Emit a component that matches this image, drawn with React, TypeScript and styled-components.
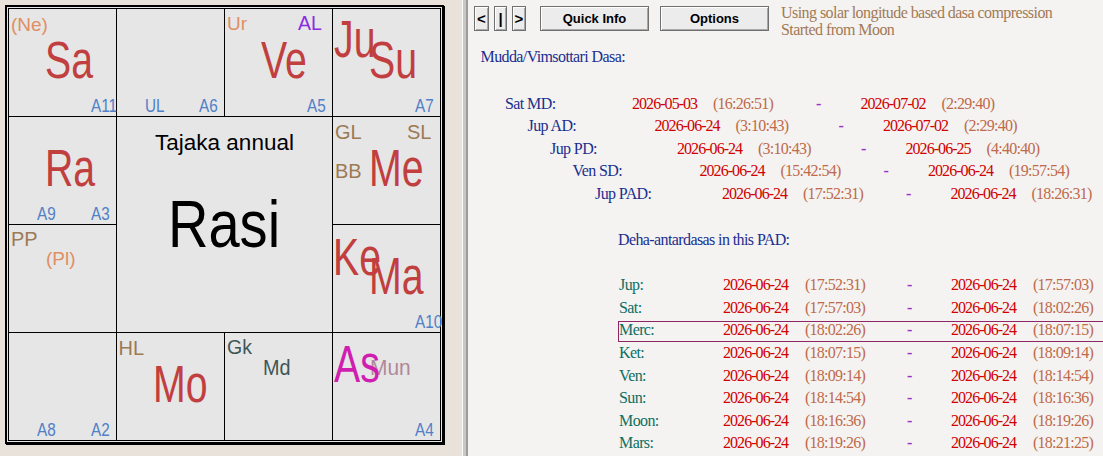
import React from "react";
import styled, { createGlobalStyle } from "styled-components";

const GlobalStyle = createGlobalStyle`
  html, body { margin: 0; padding: 0; }
  body { width: 1103px; height: 456px; overflow: hidden; background: #f4f3f1; }
`;

const Page = styled.div`
  display: flex;
  width: 1103px;
  height: 456px;
  overflow: hidden;
`;

const LeftPane = styled.div`
  flex: none;
  width: 462px;
  box-sizing: border-box;
  padding: 5px 0 0 5px;
  background: #e9e2da;
`;

const Divider = styled.div`
  flex: none;
  width: 6px;
  box-sizing: border-box;
  border-left: 1px solid #fafafa;
  border-right: 2px solid #9c9c9c;
  background: #c8c8c8;
`;

const RightPane = styled.div`
  flex: 1;
  min-width: 0;
  overflow: hidden;
  background: #f4f3f1;
  font-family: "Liberation Serif", "Times New Roman", serif;
  font-size: 16px;
  letter-spacing: -0.6px;
`;

/* ---------- chart ---------- */

const ChartFrame = styled.div`
  width: fit-content;
  border: 2px solid #000;
  box-shadow: 1px 1px 0 #000;
  padding: 1px;
  background: #e6e6e6;
`;

const ChartGrid = styled.div`
  display: grid;
  grid-template-columns: repeat(4, 107px);
  grid-template-rows: repeat(4, 107px);
  gap: 1px;
  padding: 1px;
  background: #000;
  font-family: "Liberation Sans", Arial, sans-serif;
`;

const House = styled.div<{ $row: number; $col: number }>`
  position: relative;
  grid-row: ${(p) => p.$row + 1};
  grid-column: ${(p) => p.$col + 1};
  background: #e6e6e6;
`;

const CenterCell = styled.div`
  grid-row: 2 / span 2;
  grid-column: 2 / span 2;
  display: flex;
  flex-direction: column;
  align-items: center;
  padding-top: 15px;
  background: #e6e6e6;
`;

const ChartTitle = styled.div`
  font-size: 22.5px;
  line-height: 1;
  color: #000;
`;

const ChartName = styled.div`
  margin-top: 36px;
  font-size: 66px;
  line-height: 1;
  color: #000;
  transform: scaleX(0.85);
`;

const Mark = styled.span<{
  $x: number;
  $y: number;
  $size: number;
  $color: string;
  $sx: number;
}>`
  position: absolute;
  left: ${(p) => p.$x}px;
  top: ${(p) => p.$y}px;
  font-size: ${(p) => p.$size}px;
  line-height: 1;
  color: ${(p) => p.$color};
  white-space: nowrap;
  transform: scaleX(${(p) => p.$sx});
  transform-origin: left top;
`;

type Kind = "planet" | "as" | "asc" | "upa" | "outer" | "al" | "gk" | "md" | "mun";

const kinds: Record<Kind, { size: number; color: string; sx: number }> = {
  planet: { size: 51, color: "#c13f3f", sx: 0.77 },
  as: { size: 51, color: "#d01fb0", sx: 0.77 },
  asc: { size: 18, color: "#5080c8", sx: 0.85 },
  upa: { size: 20, color: "#9c7a54", sx: 1 },
  outer: { size: 19, color: "#df8f63", sx: 1 },
  al: { size: 19.5, color: "#8a2be2", sx: 1 },
  gk: { size: 19.5, color: "#3f5656", sx: 1 },
  md: { size: 22, color: "#3f5656", sx: 0.9 },
  mun: { size: 22, color: "#b0889a", sx: 0.95 },
};

type M = [string, Kind, number, number];

const houses: { row: number; col: number; marks: M[] }[] = [
  { row: 0, col: 0, marks: [["(Ne)", "outer", 2, 5.5], ["Sa", "planet", 36, 25.5], ["A11", "asc", 82, 88]] },
  { row: 0, col: 1, marks: [["UL", "asc", 28, 88], ["A6", "asc", 82, 88]] },
  {
    row: 0,
    col: 2,
    marks: [["Ur", "outer", 2, 5], ["AL", "al", 73, 5], ["Ve", "planet", 36, 25.5], ["A5", "asc", 82, 88]],
  },
  { row: 0, col: 3, marks: [["Ju", "planet", 1, 5], ["Su", "planet", 36, 26], ["A7", "asc", 82, 88]] },
  { row: 1, col: 0, marks: [["Ra", "planet", 36, 25.5], ["A9", "asc", 28, 88], ["A3", "asc", 82, 88]] },
  {
    row: 1,
    col: 3,
    marks: [["GL", "upa", 2, 5], ["SL", "upa", 74, 5], ["BB", "upa", 2, 44], ["Me", "planet", 36, 25.5]],
  },
  { row: 2, col: 0, marks: [["PP", "upa", 2, 4], ["(Pl)", "outer", 37, 24]] },
  { row: 2, col: 3, marks: [["Ke", "planet", 0, 7], ["Ma", "planet", 36, 25.5], ["A10", "asc", 82, 88]] },
  { row: 3, col: 0, marks: [["A8", "asc", 28, 88], ["A2", "asc", 82, 88]] },
  { row: 3, col: 1, marks: [["HL", "upa", 1.5, 5], ["Mo", "planet", 36, 25.5]] },
  { row: 3, col: 2, marks: [["Gk", "gk", 2, 5], ["Md", "md", 38, 23.5]] },
  { row: 3, col: 3, marks: [["Mun", "mun", 37, 23.5], ["As", "as", 1, 6], ["A4", "asc", 82, 88]] },
];

/* ---------- dasa panel ---------- */

const Toolbar = styled.div`
  display: flex;
  align-items: flex-start;
  box-sizing: border-box;
  height: 38px;
  padding: 5px 0 0 6px;
`;

const NavGroup = styled.div`
  display: flex;
  gap: 5px;
  margin-top: 1px;
`;

const NavButton = styled.button<{ $w: number }>`
  width: ${(p) => p.$w}px;
  height: 25px;
  padding: 0;
  border: 1px solid #707070;
  box-shadow: inset 1px 1px 0 #fff, inset -1px -1px 0 #a8a8a8;
  background: #ececec;
  font-family: "Liberation Sans", Arial, sans-serif;
  font-size: 15px;
  font-weight: 700;
  color: #000;
`;

const WideButton = styled.button<{ $gap: number }>`
  width: 109px;
  height: 25px;
  margin: 1px 0 0 ${(p) => p.$gap}px;
  padding: 0;
  border: 1px solid #707070;
  box-shadow: inset 1px 1px 0 #fff, inset -1px -1px 0 #a8a8a8;
  background: #ececec;
  font-family: "Liberation Sans", Arial, sans-serif;
  font-size: 13px;
  font-weight: 700;
  color: #000;
`;

const Status = styled.div`
  margin-left: 12px;
  line-height: 16.5px;
  letter-spacing: -0.55px;
  color: #a27a56;
`;

const Heading = styled.div<{ $top: number; $left: number }>`
  margin: ${(p) => p.$top}px 0 0 ${(p) => p.$left}px;
  line-height: 22.6px;
  color: #1b2f8f;
`;

const Rows = styled.div<{ $top: number; $left: number }>`
  margin: ${(p) => p.$top}px 0 0 ${(p) => p.$left}px;
`;

const DasaRow = styled.div<{ $indent: number }>`
  display: grid;
  grid-template-columns: 127px 81px 103px 44.5px 81px auto;
  padding-left: ${(p) => p.$indent}px;
  height: 22.6px;
  line-height: 22.6px;
  white-space: nowrap;
`;

const DehaRow = styled.div<{ $active?: boolean }>`
  position: relative;
  display: grid;
  grid-template-columns: 104px 82px 102px 44px 82px auto;
  padding-left: 1px;
  height: 22.6px;
  line-height: 22.6px;
  white-space: nowrap;

  &::after {
    content: "";
    display: ${(p) => (p.$active ? "block" : "none")};
    position: absolute;
    left: 0;
    right: -40px;
    top: 2px;
    height: 21px;
    box-sizing: border-box;
    border: 1px solid #8e2566;
    pointer-events: none;
  }
`;

const Lord = styled.span<{ $deha?: boolean }>`
  color: ${(p) => (p.$deha ? "#0f6f63" : "#1b2f8f")};
`;

const DateText = styled.span`
  color: #d00000;
  letter-spacing: -0.95px;
`;

const TimeText = styled.span`
  color: #bf6a4a;
  letter-spacing: -0.75px;
`;

const Dash = styled.span`
  color: #9a30c8;
  font-weight: 700;
`;

const dasas = [
  ["Sat MD:", "2026-05-03", "(16:26:51)", "2026-07-02", "(2:29:40)"],
  ["Jup AD:", "2026-06-24", "(3:10:43)", "2026-07-02", "(2:29:40)"],
  ["Jup PD:", "2026-06-24", "(3:10:43)", "2026-06-25", "(4:40:40)"],
  ["Ven SD:", "2026-06-24", "(15:42:54)", "2026-06-24", "(19:57:54)"],
  ["Jup PAD:", "2026-06-24", "(17:52:31)", "2026-06-24", "(18:26:31)"],
];

const dehas = [
  ["Jup:", "(17:52:31)", "(17:57:03)"],
  ["Sat:", "(17:57:03)", "(18:02:26)"],
  ["Merc:", "(18:02:26)", "(18:07:15)"],
  ["Ket:", "(18:07:15)", "(18:09:14)"],
  ["Ven:", "(18:09:14)", "(18:14:54)"],
  ["Sun:", "(18:14:54)", "(18:16:36)"],
  ["Moon:", "(18:16:36)", "(18:19:26)"],
  ["Mars:", "(18:19:26)", "(18:21:25)"],
];

const App = () => {
  return (
    <Page>
      <GlobalStyle />
      <LeftPane>
        <ChartFrame>
          <ChartGrid>
            {houses.map((h) => (
              <House key={`${h.row}-${h.col}`} $row={h.row} $col={h.col}>
                {h.marks.map(([text, kind, x, y]) => (
                  <Mark
                    key={text}
                    $x={x}
                    $y={y}
                    $size={kinds[kind].size}
                    $color={kinds[kind].color}
                    $sx={kinds[kind].sx}
                  >
                    {text}
                  </Mark>
                ))}
              </House>
            ))}
            <CenterCell>
              <ChartTitle>Tajaka annual</ChartTitle>
              <ChartName>Rasi</ChartName>
            </CenterCell>
          </ChartGrid>
        </ChartFrame>
      </LeftPane>
      <Divider />
      <RightPane>
        <Toolbar>
          <NavGroup>
            <NavButton $w={15}>&lt;</NavButton>
            <NavButton $w={13}>|</NavButton>
            <NavButton $w={14}>&gt;</NavButton>
          </NavGroup>
          <WideButton $gap={14}>Quick Info</WideButton>
          <WideButton $gap={11}>Options</WideButton>
          <Status>
            Using solar longitude based dasa compression
            <br />
            Started from Moon
          </Status>
        </Toolbar>
        <Heading $top={8.3} $left={12.5}>
          Mudda/Vimsottari Dasa:
        </Heading>
        <Rows $top={23.7} $left={37}>
          {dasas.map((d, i) => (
            <DasaRow key={d[0]} $indent={i * 22.5}>
              <Lord>{d[0]}</Lord>
              <DateText>{d[1]}</DateText>
              <TimeText>{d[2]}</TimeText>
              <Dash>-</Dash>
              <DateText>{d[3]}</DateText>
              <TimeText>{d[4]}</TimeText>
            </DasaRow>
          ))}
        </Rows>
        <Heading $top={23.4} $left={150}>
          Deha-antardasas in this PAD:
        </Heading>
        <Rows $top={22.7} $left={150}>
          {dehas.map((d) => (
            <DehaRow key={d[0]} $active={d[0] === "Merc:"}>
              <Lord $deha>{d[0]}</Lord>
              <DateText>2026-06-24</DateText>
              <TimeText>{d[1]}</TimeText>
              <Dash>-</Dash>
              <DateText>2026-06-24</DateText>
              <TimeText>{d[2]}</TimeText>
            </DehaRow>
          ))}
        </Rows>
      </RightPane>
    </Page>
  );
};

export default App;
